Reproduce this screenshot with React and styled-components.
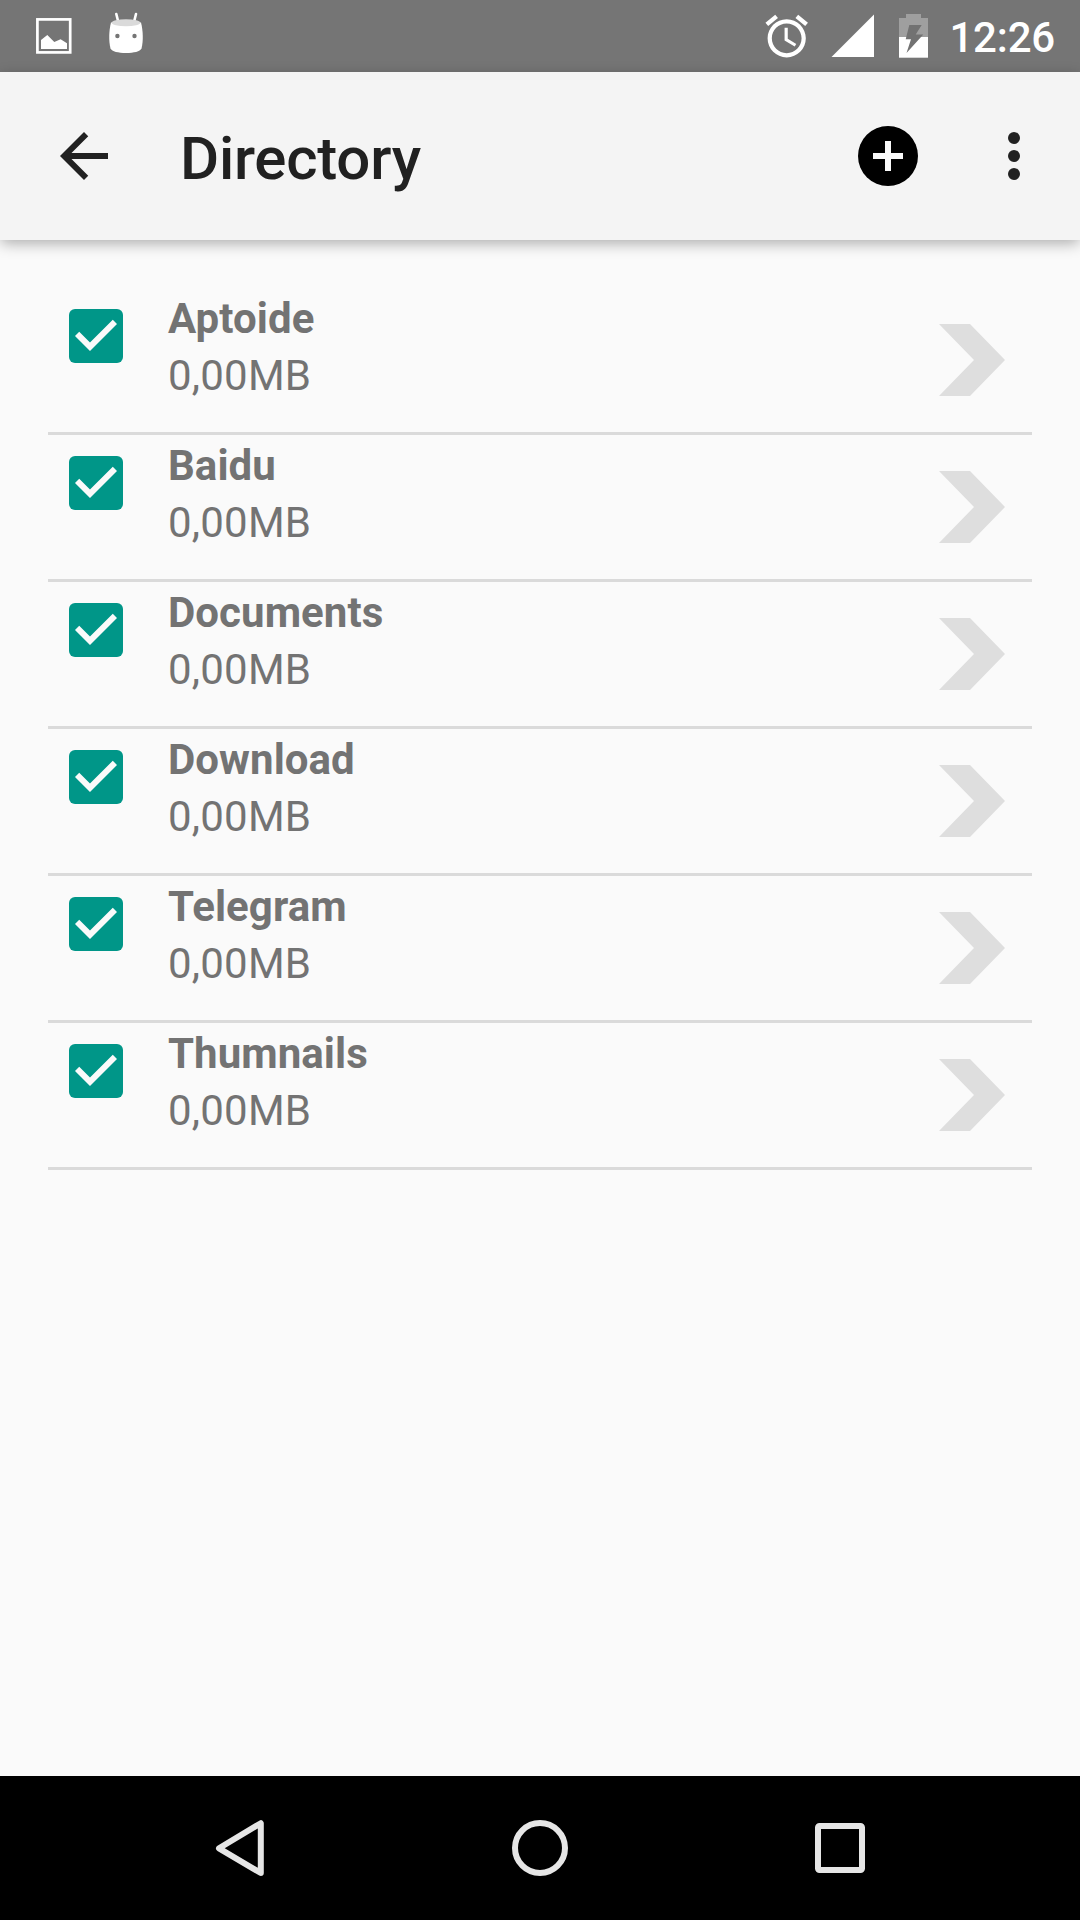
import React, {useState} from "react";
import styled, {createGlobalStyle} from "styled-components";

const GlobalStyle = createGlobalStyle`
    * {
        box-sizing: border-box;
    }

    body {
        margin: 0;
        background-color: #fafafa;
        font-family: Roboto, sans-serif;
    }
`;

const Screen = styled.div`
    width: 1080px;
    height: 1920px;
    display: flex;
    flex-direction: column;
    background-color: #fafafa;
    overflow: hidden;
`;

const StatusBar = styled.div`
    height: 72px;
    flex-shrink: 0;
    display: flex;
    justify-content: space-between;
    padding: 0 25px 0 30px;
    background-color: #757575;
`;

const StatusGroup = styled.div`
    display: flex;
    align-items: center;
`;

const Clock = styled.span`
    margin-left: 11px;
    padding-top: 3px;
    color: white;
    font-size: 42px;
    font-weight: 500;
    line-height: 68px;
    letter-spacing: -0.2px;
`;

const AppBar = styled.header`
    position: relative;
    z-index: 1;
    height: 168px;
    flex-shrink: 0;
    display: flex;
    align-items: center;
    padding: 0 30px 0 48px;
    background-color: #f4f4f4;
    box-shadow: 0 4px 14px -1px rgba(0, 0, 0, 0.33);
`;

const Title = styled.h1`
    flex: 1;
    margin: 0;
    padding: 5px 0 0 60px;
    color: #212121;
    font-size: 60px;
    font-weight: 500;
    line-height: 70px;
    letter-spacing: -0.25px;
`;

const IconButton = styled.button`
    width: 72px;
    height: 72px;
    margin-left: ${({$gap}) => $gap || 0}px;
    padding: 0;
    border: none;
    background: none;
    color: ${({$color}) => $color || "#212121"};
    cursor: pointer;

    svg {
        display: block;
        fill: currentColor;
    }
`;

const List = styled.ul`
    flex: 1;
    margin: 0;
    padding: 48px 48px 0;
    list-style: none;
`;

const Row = styled.li`
    height: 147px;
    display: flex;
    align-items: flex-start;
    padding: 0 24px 0 12px;
    border-bottom: 3px solid #dadada;
`;

const CheckButton = styled(IconButton)`
    margin-top: 12px;
`;

const RowText = styled.div`
    flex: 1;
    padding: 2px 0 0 36px;
    color: #737373;
    font-size: 42px;
    line-height: 57px;
`;

const Name = styled.div`
    font-weight: 700;
    letter-spacing: 0.06px;
`;

const Size = styled.div`
    font-weight: 400;
    letter-spacing: 0.2px;
`;

const Chevron = styled.svg`
    width: 72px;
    height: 78px;
    margin-top: 33px;
`;

const NavBar = styled.nav`
    height: 144px;
    flex-shrink: 0;
    display: flex;
    align-items: center;
    justify-content: center;
    gap: 216px;
    background-color: black;

    svg {
        display: block;
        fill: none;
        stroke: #e6e6e6;
        stroke-width: 6;
    }
`;

const folders = ["Aptoide", "Baidu", "Documents", "Download", "Telegram", "Thumnails"];

function NotificationIcons(){
    return(
        <svg width="120" height="72" viewBox="30 0 120 72">
            <rect x="37.4" y="19.4" width="32.8" height="33" fill="none" stroke="white" strokeWidth="2.7"/>
            <path d="M41 40l6.3-5 7 7 6.3-2.8 6.4 4V49H41z" fill="white"/>
            <path d="M116.3 14l2 8M136 14l-2 8" stroke="white" strokeWidth="2.6" strokeLinecap="round"/>
            <path d="M111 22.5C109 30 108.5 41 110.5 48.5C112 51.5 118 53 126 53S140 51.5 141.5 48.5C143.5 41 143 30 141 22.5z" fill="white"/>
            <ellipse cx="126" cy="22.7" rx="14.4" ry="3.5" fill="#dadada"/>
            <circle cx="117.4" cy="36" r="2.2" fill="#757575"/>
            <circle cx="134.5" cy="36" r="2.2" fill="#757575"/>
        </svg>
    )
}

function SystemIcons(){
    return(
        <svg width="178" height="72" viewBox="760 0 178 72">
            <path transform="translate(761.2 10.7) scale(2.125)" fill="white" d="M22 5.72l-4.6-3.86-1.29 1.53 4.6 3.86L22 5.72zM7.88 3.39L6.6 1.86 2 5.71l1.29 1.53 4.59-3.85zM12.5 8H11v6l4.75 2.85.75-1.23-4-2.37V8zM12 4c-4.97 0-9 4.03-9 9s4.02 9 9 9c4.97 0 9-4.03 9-9s-4.03-9-9-9zm0 16c-3.87 0-7-3.13-7-7s3.13-7 7-7 7 3.13 7 7-3.13 7-7 7z"/>
            <path d="M831.5 57H874V14.5z" fill="white"/>
            <path d="M899 37V18h7v-4h15v4h7v19z" fill="#9f9f9f"/>
            <path d="M899 37h29v20.7h-29z" fill="white"/>
            <path d="M909.3 25H921.7L915.7 34.5H923.3L906.5 53L911 39.3H905.7z" fill="#727272"/>
        </svg>
    )
}

export default function App(){

    const [checked, setChecked] = useState(folders);

    const toggle = (name) => {
        if (checked.includes(name)) {
            setChecked(checked.filter((item) => item !== name));
        } else {
            setChecked([...checked, name]);
        }
    }

    return(
        <>
            <GlobalStyle/>
            <Screen>
                <StatusBar>
                    <StatusGroup>
                        <NotificationIcons/>
                    </StatusGroup>
                    <StatusGroup>
                        <SystemIcons/>
                        <Clock>12:26</Clock>
                    </StatusGroup>
                </StatusBar>
                <AppBar>
                    <IconButton aria-label="Back">
                        <svg width="72" height="72" viewBox="0 0 24 24">
                            <path d="M20 11H7.83l5.59-5.59L12 4l-8 8 8 8 1.41-1.41L7.83 13H20z"/>
                        </svg>
                    </IconButton>
                    <Title>Directory</Title>
                    <IconButton aria-label="Add" $color="black">
                        <svg width="72" height="72" viewBox="0 0 24 24">
                            <circle cx="12" cy="12" r="10"/>
                            <path d="M12 7v10M7 12h10" stroke="#fafafa" strokeWidth="2"/>
                        </svg>
                    </IconButton>
                    <IconButton aria-label="More" $gap={54}>
                        <svg width="72" height="72" viewBox="0 0 24 24">
                            <circle cx="12" cy="6" r="2"/>
                            <circle cx="12" cy="12" r="2"/>
                            <circle cx="12" cy="18" r="2"/>
                        </svg>
                    </IconButton>
                </AppBar>
                <List>
                    {folders.map((name) => (
                        <Row key={name}>
                            <CheckButton $color="#009688" aria-label={name} onClick={() => toggle(name)}>
                                <svg width="72" height="72" viewBox="0 0 24 24">
                                    <rect x="3" y="3" width="18" height="18" rx="2"/>
                                    {checked.includes(name) && (
                                        <path fill="#fafafa" d="M10 17l-5-5 1.41-1.41L10 14.17l7.59-7.59L19 8z"/>
                                    )}
                                </svg>
                            </CheckButton>
                            <RowText>
                                <Name>{name}</Name>
                                <Size>0,00MB</Size>
                            </RowText>
                            <Chevron viewBox="936 321 72 78">
                                <path d="M939 324h31l35 36-35 36h-31l35-36z" fill="#dedede"/>
                            </Chevron>
                        </Row>
                    ))}
                </List>
                <NavBar>
                    <svg width="84" height="84" viewBox="198 1806 84 84">
                        <path d="M219 1848.3L260.8 1823.2V1873z" strokeLinejoin="round"/>
                    </svg>
                    <svg width="84" height="84" viewBox="498 1806 84 84">
                        <circle cx="540" cy="1848" r="25"/>
                    </svg>
                    <svg width="84" height="84" viewBox="798 1806 84 84">
                        <rect x="818" y="1826" width="44" height="44" rx="1.5"/>
                    </svg>
                </NavBar>
            </Screen>
        </>
    )
};
